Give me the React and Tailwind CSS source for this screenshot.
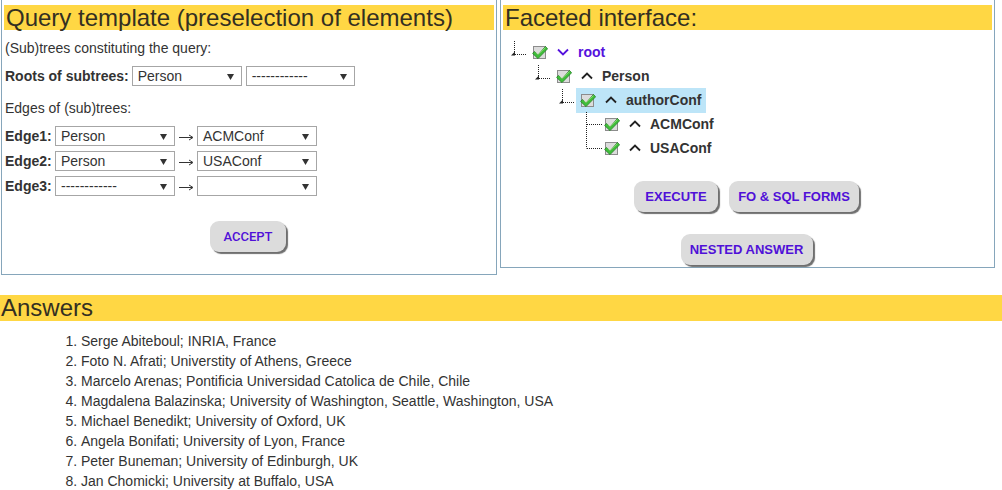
import React from "react";

const FONT = { fontFamily: '"Liberation Sans", Arial, sans-serif' };

function Select({ value, w }) {
  return (
    <div
      className={`relative h-[20px] ${w} border border-[#a6a6a6] bg-white flex items-center pl-[5px] text-[14px] text-[#333] leading-none`}
    >
      <span>{value}</span>
      <svg className="absolute right-[7px] top-[7px]" width="7" height="6" viewBox="0 0 7 6">
        <path d="M0 0 H7 L3.5 6 Z" fill="#333" />
      </svg>
    </div>
  );
}

function Arrow() {
  return (
    <svg width="22" height="20" viewBox="0 0 22 20" className="shrink-0">
      <line x1="4" y1="11.5" x2="17" y2="11.5" stroke="#333" strokeWidth="1" />
      <path d="M14 9 L18 11.5 L14 14" fill="none" stroke="#333" strokeWidth="1" />
    </svg>
  );
}

function Connector({ type }) {
  if (type === "tri") {
    return (
      <svg width="22" height="24" viewBox="0 0 22 24" className="shrink-0">
        <line x1="4.5" y1="1" x2="4.5" y2="14" stroke="#222" strokeWidth="1" strokeDasharray="1 1" />
        <path d="M1 15.5 L5 11.5 L5 15.5 Z" fill="#222" />
        <line x1="5" y1="14.5" x2="17" y2="14.5" stroke="#222" strokeWidth="1" strokeDasharray="1 1" />
      </svg>
    );
  }
  const full = type === "mid";
  return (
    <svg width="22" height="24" viewBox="0 0 22 24" className="shrink-0">
      <line x1="4.5" y1="0" x2="4.5" y2={full ? 24 : 12.5} stroke="#222" strokeWidth="1" strokeDasharray="1 1" />
      <line x1="5" y1="12.5" x2="21" y2="12.5" stroke="#222" strokeWidth="1" strokeDasharray="1 1" />
    </svg>
  );
}

function Check() {
  return (
    <svg width="16" height="16" viewBox="0 0 16 16" className="shrink-0">
      <rect x="1.5" y="2.5" width="12" height="12" fill="#dcdcdc" stroke="#8c8c8c" />
      <path
        d="M2.5 7.5 L6 11 L13.5 2.5 L15.6 4.8 L6 14.6 L0.6 9.4 Z"
        fill="#3fbf3a"
        stroke="#1f7d22"
        strokeWidth="0.8"
        strokeLinejoin="round"
      />
      <path d="M3.5 8.2 L6 10.6 L13.5 3.6" fill="none" stroke="#9be37a" strokeWidth="0.8" />
    </svg>
  );
}

function Chevron({ down, color }) {
  return (
    <svg width="12" height="8" viewBox="0 0 12 8" className="shrink-0">
      {down ? (
        <polyline points="1,1.5 6,6.5 11,1.5" fill="none" stroke={color} strokeWidth="1.8" />
      ) : (
        <polyline points="1,6.5 6,1.5 11,6.5" fill="none" stroke={color} strokeWidth="1.8" />
      )}
    </svg>
  );
}

function TreeRow({ level, label, root, highlight, conn }) {
  const ml = ["ml-[9px]", "ml-[33px]", "ml-[57px]", "ml-[81px]"][level];
  const inner = (
    <>
      <Check />
      <span className="ml-[9px]">
        <Chevron down={root} color={root ? "#5512dd" : "#222"} />
      </span>
      <span
        className={`ml-[9px] font-bold text-[14px] ${root ? "text-[#5512dd]" : "text-[#333]"}`}
      >
        {label}
      </span>
    </>
  );
  return (
    <div className={`flex items-center h-[24px] ${ml}`}>
      <Connector type={conn} />
      {highlight ? (
        <div className="flex items-center h-[25px] bg-[#bde5f8] -ml-[4px] pl-[4px] pr-[5px]">{inner}</div>
      ) : (
        inner
      )}
    </div>
  );
}

function Button({ children, className = "" }) {
  return (
    <div
      className={`h-[30px] rounded-[9px] bg-[#dcdcdc] shadow-[2px_2px_1px_#6f6f6f] flex items-center justify-center text-[13px] font-bold text-[#5010d8] ${className}`}
    >
      {children}
    </div>
  );
}

const answers = [
  "Serge Abiteboul; INRIA, France",
  "Foto N. Afrati; Universtity of Athens, Greece",
  "Marcelo Arenas; Pontificia Universidad Catolica de Chile, Chile",
  "Magdalena Balazinska; University of Washington, Seattle, Washington, USA",
  "Michael Benedikt; University of Oxford, UK",
  "Angela Bonifati; University of Lyon, France",
  "Peter Buneman; University of Edinburgh, UK",
  "Jan Chomicki; University at Buffalo, USA",
];

export default function App() {
  return (
    <div className="w-[1002px] h-[490px] bg-white text-[#333] overflow-hidden" style={FONT}>
      <div className="flex items-start pl-[1px] gap-[3px]">
        {/* Left panel */}
        <div className="w-[496px] h-[275px] border border-t-0 border-[#86a6bb] pt-[5px] flex flex-col">
          <div className="mx-[2px] h-[25px] bg-[#ffd744] text-[24px] leading-[25px] pl-[2px] text-[#332f22]">
            Query template (preselection of elements)
          </div>
          <div className="px-[3px]">
            <div className="mt-[9px] text-[14px] leading-[18px]">(Sub)trees constituting the query:</div>
            <div className="mt-[9px] flex items-center gap-[4px] h-[20px]">
              <span className="font-bold text-[14px] leading-[20px] -mr-[1px]">Roots of subtrees:</span>
              <Select value="Person" w="w-[110px]" />
              <Select value="------------" w="w-[109px]" />
            </div>
            <div className="mt-[13px] text-[14px] leading-[18px]">Edges of (sub)trees:</div>
            <div className="mt-[9px] flex flex-col gap-[5px]">
              {[
                ["Edge1:", "Person", "ACMConf"],
                ["Edge2:", "Person", "USAConf"],
                ["Edge3:", "------------", ""],
              ].map(([l, a, b]) => (
                <div key={l} className="flex items-center h-[20px]">
                  <span className="font-bold text-[14px] leading-[20px] w-[50px]">{l}</span>
                  <Select value={a} w="w-[120px]" />
                  <Arrow />
                  <Select value={b} w="w-[120px]" />
                </div>
              ))}
            </div>
            <div className="mt-[25px] flex justify-center pr-[2px]">
              <Button className="w-[76px] h-[31px] font-medium text-[13px] [font-family:Roboto,sans-serif]">ACCEPT</Button>
            </div>
          </div>
        </div>

        {/* Right panel */}
        <div className="w-[495px] h-[268px] border border-t-0 border-[#86a6bb] pt-[5px] flex flex-col">
          <div className="mx-[2px] h-[25px] bg-[#ffd744] text-[24px] leading-[25px] pl-[2px] text-[#332f22]">
            Faceted interface:
          </div>
          <div className="mt-[10px] flex flex-col">
            <TreeRow level={0} label="root" root conn="tri" />
            <TreeRow level={1} label="Person" conn="tri" />
            <TreeRow level={2} label="authorConf" highlight conn="tri" />
            <TreeRow level={3} label="ACMConf" conn="mid" />
            <TreeRow level={3} label="USAConf" conn="end" />
          </div>
          <div className="mt-[21px] flex justify-center gap-[11px] pr-[2px]">
            <Button className="w-[84px] h-[31px]">EXECUTE</Button>
            <Button className="w-[130px] h-[31px]">FO &amp; SQL FORMS</Button>
          </div>
          <div className="mt-[22px] flex justify-center pr-[2px]">
            <Button className="w-[132px] h-[31px]">NESTED ANSWER</Button>
          </div>
        </div>
      </div>

      <div className="mt-[20px] h-[26px] bg-[#ffd744] text-[24px] leading-[26px] pl-[1px] text-[#332f22]">
        Answers
      </div>
      <ol className="list-decimal pl-[81px] mt-[10px] text-[14px] leading-[20px] text-[#333]">
        {answers.map((a) => (
          <li key={a}>{a}</li>
        ))}
      </ol>
    </div>
  );
}
